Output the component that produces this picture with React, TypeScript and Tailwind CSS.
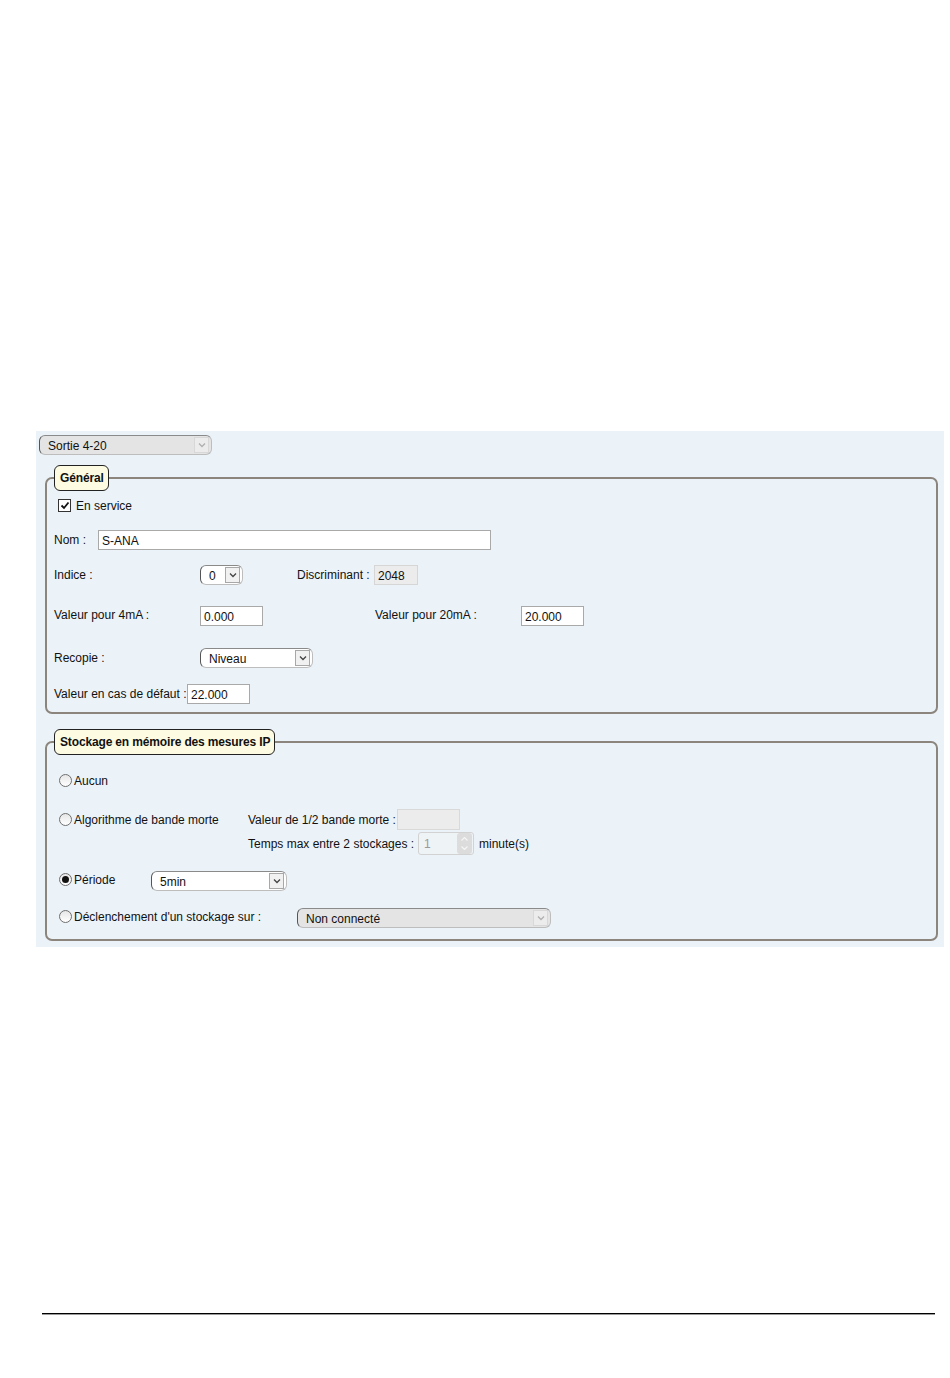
import React from "react";

const font = { fontFamily: '"Liberation Sans", Arial, sans-serif' };

function Chevron({ light }: { light?: boolean }) {
  return (
    <svg width="8" height="6" viewBox="0 0 8 6">
      <path d="M1 1.5 L4 4.5 L7 1.5" fill="none" stroke={light ? "#b0b0b0" : "#444"} strokeWidth="1.3" />
    </svg>
  );
}

function Select({ w, text, grey }: { w: string; text: string; grey?: boolean }) {
  return (
    <div
      className={`${w} h-[20px] flex items-center rounded-[6px] border border-[#bdbdbd] border-t-[#8a8a8a] border-l-[#555] border-l-[1.5px] ${
        grey ? "bg-[#e4e4e4]" : "bg-white"
      }`}
    >
      <span className="flex-1 pl-[8px] pt-[2px] text-[12px] leading-none text-[#111] truncate">{text}</span>
      <span
        className={`mr-[2px] w-[15px] h-[16px] flex items-center justify-center border ${
          grey ? "border-[#d8d8d8] bg-[#ececec]" : "border-[#a8a8a8] bg-[#f1f1f1]"
        }`}
      >
        <Chevron light={grey} />
      </span>
    </div>
  );
}

function Input({ w, value, grey }: { w: string; value?: string; grey?: boolean }) {
  return (
    <div
      className={`${w} h-[20px] flex items-center border ${
        grey ? "bg-[#ececec] border-[#d6d6d6]" : "bg-white border-[#a9a9a9]"
      } pl-[3px] pt-[1px] text-[12px] text-[#111] leading-none`}
    >
      {value}
    </div>
  );
}

function Radio({ checked }: { checked?: boolean }) {
  return (
    <span className="w-[13px] h-[13px] rounded-full border border-[#6f6f6f] bg-gradient-to-b from-[#e6e6e6] to-white flex items-center justify-center shrink-0">
      {checked && <span className="w-[7px] h-[7px] rounded-full bg-[#111]" />}
    </span>
  );
}

function Legend({ children }: { children: React.ReactNode }) {
  return (
    <legend className="ml-[7px] h-[26px] pl-[5px] pr-[4px] flex items-center rounded-[6px] border border-[#222] bg-[#fdfbe1] text-[12px] font-bold tracking-[-0.15px] text-[#111]">
      {children}
    </legend>
  );
}

export default function App() {
  return (
    <div className="w-[950px] h-[1378px] bg-white pt-[431px]" style={font}>
      <div className="ml-[36px] w-[908px] h-[516px] bg-[#ebf3f9] pt-[4px] text-[12px] text-[#111]">
        <div className="ml-[3px]">
          <Select w="w-[173px]" text="Sortie 4-20" grey />
        </div>

        {/* Général */}
        <fieldset className="mt-[10px] ml-[9px] w-[893px] border-2 border-[#8c857d] rounded-[7px] pb-[8px]">
          <Legend>Général</Legend>
          <div className="pl-[7px]">
            <div className="mt-[8px] h-[13px] flex items-center">
              <span className="ml-[4px] w-[13px] h-[13px] border border-[#333] bg-white flex items-center justify-center">
                <svg width="10" height="9" viewBox="0 0 10 9">
                  <path d="M1.5 4.5 L4 7 L8.5 1.5" fill="none" stroke="#111" strokeWidth="1.8" />
                </svg>
              </span>
              <span className="ml-[5px] text-[12px]">En service</span>
            </div>

            <div className="mt-[18px] h-[20px] flex items-center">
              <span className="w-[44px]">Nom :</span>
              <Input w="w-[393px]" value="S-ANA" />
            </div>

            <div className="mt-[15px] h-[20px] flex items-center">
              <span className="w-[146px]">Indice :</span>
              <Select w="w-[43px]" text="0" />
              <span className="ml-[54px] w-[77px]">Discriminant :</span>
              <Input w="w-[44px]" value="2048" grey />
            </div>

            <div className="mt-[21px] h-[20px] flex items-center">
              <span className="w-[146px] -mt-[3px]">Valeur pour 4mA :</span>
              <Input w="w-[63px]" value="0.000" />
              <span className="ml-[112px] w-[146px] -mt-[3px]">Valeur pour 20mA :</span>
              <Input w="w-[63px]" value="20.000" />
            </div>

            <div className="mt-[22px] h-[20px] flex items-center">
              <span className="w-[146px]">Recopie :</span>
              <Select w="w-[113px]" text="Niveau" />
            </div>

            <div className="mt-[16px] h-[20px] flex items-center">
              <span className="w-[133px]">Valeur en cas de défaut :</span>
              <Input w="w-[63px]" value="22.000" />
            </div>
          </div>
        </fieldset>

        {/* Stockage */}
        <fieldset className="mt-[15px] ml-[9px] w-[893px] border-2 border-[#8c857d] rounded-[7px] pb-[11px]">
          <Legend>Stockage en mémoire des mesures IP</Legend>
          <div className="pl-[12px]">
            <div className="mt-[19px] h-[13px] flex items-center">
              <Radio />
              <span className="ml-[2px]">Aucun</span>
            </div>

            <div className="mt-[22px] flex items-start">
              <div className="w-[189px] h-[21px] flex items-center">
                <Radio />
                <span className="ml-[2px]">Algorithme de bande morte</span>
              </div>
              <div className="flex flex-col">
                <div className="h-[21px] flex items-center">
                  <span className="w-[149px]">Valeur de 1/2 bande morte :</span>
                  <div className="w-[63px] h-[21px] bg-[#ececec] border border-[#d9d9d9]" />
                </div>
                <div className="mt-[2px] h-[23px] flex items-center">
                  <span className="w-[170px]">Temps max entre 2 stockages :</span>
                  <div className="w-[56px] h-[23px] flex items-center bg-[#eef3f6] border border-[#d2d2d2] rounded-[3px]">
                    <span className="flex-1 pl-[5px] pt-[1px] text-[#9a9a9a]">1</span>
                    <span className="w-[15px] h-[21px] mr-[1px] rounded-[3px] bg-[#dcdcdc] flex flex-col items-center justify-center gap-[5px]">
                      <svg width="7" height="4" viewBox="0 0 7 4">
                        <path d="M0.5 3.5 L3.5 0.5 L6.5 3.5" fill="none" stroke="#f5f5f5" strokeWidth="1.2" />
                      </svg>
                      <svg width="7" height="4" viewBox="0 0 7 4">
                        <path d="M0.5 0.5 L3.5 3.5 L6.5 0.5" fill="none" stroke="#f5f5f5" strokeWidth="1.2" />
                      </svg>
                    </span>
                  </div>
                  <span className="ml-[5px]">minute(s)</span>
                </div>
              </div>
            </div>

            <div className="mt-[16px] h-[20px] flex items-center">
              <div className="w-[92px] flex items-center -mt-[3px]">
                <Radio checked />
                <span className="ml-[2px]">Période</span>
              </div>
              <Select w="w-[136px]" text="5min" />
            </div>

            <div className="mt-[17px] h-[20px] flex items-center">
              <div className="w-[238px] flex items-center -mt-[3px]">
                <Radio />
                <span className="ml-[2px]">Déclenchement d'un stockage sur :</span>
              </div>
              <Select w="w-[254px]" text="Non connecté" grey />
            </div>
          </div>
        </fieldset>
      </div>

      <div className="mt-[366px] ml-[42px] w-[893px] h-[2px] border-t border-black border-b border-b-[#9a9a9a]" />
    </div>
  );
}
